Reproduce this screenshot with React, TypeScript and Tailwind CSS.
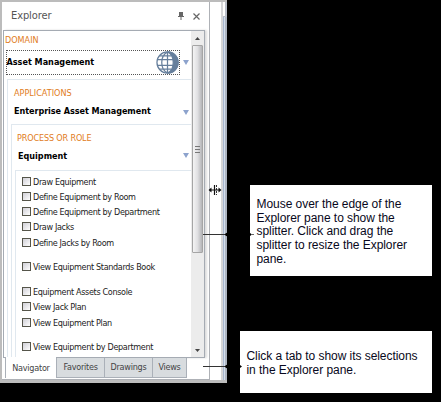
import React from 'react';

const ui = "font-['DejaVu_Sans_Condensed','DejaVu_Sans',sans-serif]";

function Arrow() {
  return (
    <svg className="mr-[2px] block h-[5px] w-[6px] shrink-0" viewBox="0 0 6 5">
      <path d="M0 0h6L3 5z" fill="#8da3cd" />
    </svg>
  );
}

function Globe() {
  return (
    <svg className="block h-[23px] w-[23px] shrink-0" viewBox="0 0 24 24" fill="none" stroke="#667f9c" strokeWidth="1.3">
      <circle cx="12" cy="12" r="11" fill="#fff" />
      <path d="M12 1a11 11 0 0 1 0 22c3.500-1.500 6-5.500 6-11S15.500 2.500 12 1z" fill="#667f9c" />
      <path d="M12 1C8 3 6 7 6 12s2 9 6 11M12 1v22M1.500 9h17M1.500 15h17M4 5.200h12M4 18.800h12" />
    </svg>
  );
}

function Item({ children, className = '' }: { children: React.ReactNode; className?: string }) {
  return (
    <div className={`flex h-[15px] items-center gap-[2px] whitespace-nowrap text-[9px] tracking-[-0.35px] text-[#222] ${className}`}>
      <span className="h-[9px] w-[9px] shrink-0 border border-[#55554a] bg-gradient-to-br from-[#d0cfd6] to-white" />
      <span className="pt-[2px]">{children}</span>
    </div>
  );
}

function ScrollBar() {
  return (
    <div className="flex w-[13px] shrink-0 flex-col bg-[#ececec]">
      <div className="flex h-[14px] items-center justify-center">
        <svg className="block h-[3px] w-[5px]" viewBox="0 0 5 3"><path d="M0 3h5L2.500 0z" fill="#444" /></svg>
      </div>
      <div className="ml-px flex h-[208px] w-[11px] items-center justify-center rounded-[1px] border border-[#a5a5a5] bg-gradient-to-r from-[#f4f4f4] via-[#e0e0e2] to-[#b4b5b8]">
        <svg className="block h-[7px] w-[6px]" viewBox="0 0 6 7"><path d="M0 .5h5M0 3.500h5M0 6.500h5" stroke="#777" /></svg>
      </div>
      <div className="mt-auto flex h-[14px] items-center justify-center">
        <svg className="block h-[3px] w-[5px]" viewBox="0 0 5 3"><path d="M0 0h5L2.500 3z" fill="#444" /></svg>
      </div>
    </div>
  );
}

function Leader({ className }: { className: string }) {
  return (
    <svg className={`absolute left-[203px] h-[5px] w-[24px] ${className}`} viewBox="0 0 24 5">
      <path d="M0 2.500h24" stroke="#333" />
      <circle cx="24" cy="2.500" r="1.800" fill="#000" />
    </svg>
  );
}

export default function App() {
  return (
    <div className="relative flex h-[402px] w-[441px] overflow-hidden bg-black">
      <div className={`flex h-[383px] w-[227px] shrink-0 border-b-[3px] border-l-2 border-t-2 border-[#bcbcbc] bg-white ${ui}`}>
        <div className="flex w-[208px] shrink-0 flex-col border-b border-r border-[#aeb1b6]">
          <div className="flex h-[28px] shrink-0 items-center pl-[9px] text-[#555]">
            <span className="w-[120px] text-[11px] tracking-[-0.1px]">Explorer</span>
            <svg className="ml-[47px] block h-[8px] w-[6px]" viewBox="0 0 6 8">
              <path d="M1 0h4v4h1v1H0V4h1zM2.500 5h1v3h-1z" fill="#666" />
            </svg>
            <svg className="ml-[9px] block h-[7px] w-[7px]" viewBox="0 0 7 7">
              <path d="M.5.5l6 6M6.500.5l-6 6" stroke="#666" strokeWidth="1.2" />
            </svg>
          </div>
          <div className="ml-px flex h-[328px] w-[202px] shrink-0 border border-[#a5abb3] shadow-[2px_0_2px_#dddddd]">
            <div className="flex min-w-0 flex-1 flex-col">
              <div className="flex h-[19px] items-center pl-[1px] text-[9px] text-[#df7c22]">DOMAIN</div>
              <div className="flex h-[25px] items-center pl-[2px]">
                <div className="flex h-[25px] w-[175px] items-center justify-between border border-dotted border-[#555]">
                  <b className="-ml-[0.5px] whitespace-nowrap pt-px text-[9px] text-black">Asset Management</b>
                  <Globe />
                </div>
                <span className="ml-[3px]"><Arrow /></span>
              </div>
              <div className="ml-[3px] mt-[4px] flex h-[278px] flex-col border-l border-t border-[#e0e8ef]">
                <div className="flex h-[26px] items-center pl-[6px] pt-[2px] text-[9px] text-[#df7c22]">APPLICATIONS</div>
                <div className="flex h-[12px] items-center justify-between pl-[6px] text-[9px] text-black">
                  <b className="whitespace-nowrap tracking-[-0.05px]">Enterprise Asset Management</b><Arrow />
                </div>
                <div className="ml-[3px] mt-[6px] flex h-[233px] flex-col border-l border-t border-[#e0e8ef]">
                  <div className="flex h-[26px] items-center pl-[5px] pt-[2px] text-[9px] tracking-[-0.15px] text-[#df7c22]">PROCESS OR ROLE</div>
                  <div className="flex h-[12px] items-center justify-between pl-[6px] text-[9px] text-black">
                    <b>Equipment</b><span className="-mt-[3px]"><Arrow /></span>
                  </div>
                  <div className="ml-[3px] mt-[7px] flex h-[187px] flex-col border-l border-t border-[#e0e8ef] pl-[6px] pt-[3px]">
                    <Item>Draw Equipment</Item>
                    <Item>Define Equipment by Room</Item>
                    <Item>Define Equipment by Department</Item>
                    <Item>Draw Jacks</Item>
                    <Item className="mt-px">Define Jacks by Room</Item>
                    <Item className="mt-[9px]">View Equipment Standards Book</Item>
                    <Item className="mt-[10px]">Equipment Assets Console</Item>
                    <Item>View Jack Plan</Item>
                    <Item className="mt-px">View Equipment Plan</Item>
                    <Item className="mt-[9px]">View Equipment by Department</Item>
                  </div>
                </div>
              </div>
            </div>
            <ScrollBar />
          </div>
          <div className="ml-[3px] flex items-start text-[9px] tracking-[-0.25px] text-[#444]">
            <div className="-mt-px flex h-[21px] w-[51px] items-center justify-center border-l border-[#aab0b8] bg-white pt-[2px]">Navigator</div>
            <div className="flex h-[20px] w-[49px] items-center justify-center border border-t-0 border-[#aab0b8] bg-[#d8dcdf]">Favorites</div>
            <div className="flex h-[20px] w-[48px] items-center justify-center border-b border-r border-[#aab0b8] bg-[#d8dcdf]">Drawings</div>
            <div className="flex h-[20px] w-[34px] items-center justify-center border-b border-r border-[#aab0b8] bg-[#d8dcdf]">Views</div>
          </div>
        </div>
        <div className="w-[11px]" />
        <div className="w-[2px] bg-[#d6d6d8]" />
        <div className="flex w-[4px] flex-col">
          <div className="h-[15px] border-b border-r-2 border-[#b9bec8]" />
          <div className="flex-1 border-l border-r-2 border-l-[#a9b8d0] border-r-[#aeb5c1] bg-[#d5dfed]" />
        </div>
      </div>
      <div className="flex flex-1 flex-col items-end pr-[9px] pt-[185px] font-['Liberation_Sans',Arial,sans-serif] text-[12px] leading-[13.7px] text-[#080820]">
        <div className="h-[91px] w-[182px] whitespace-nowrap bg-white pl-[6.5px] pt-[13px] tracking-[-0.05px]">
          Mouse over the edge of the<br />Explorer pane to show the<br />splitter. Click and drag the<br />splitter to resize the Explorer<br />pane.
        </div>
        <div className="mt-[55px] h-[62px] w-[192px] whitespace-nowrap bg-white pl-[6.5px] pt-[19px] tracking-[-0.05px]">
          Click a tab to show its selections<br />in the Explorer pane.
        </div>
      </div>
      <svg className="absolute left-[208px] top-[184px] h-[12px] w-[14px]" viewBox="0 0 14 12">
        <path d="M6.500 1v10" stroke="#111" strokeWidth="1.2" />
        <path d="M8.500 1v10" stroke="#333" strokeDasharray="2 1" />
        <path d="M2 6h10" stroke="#111" />
        <path d="M0.500 6l3-2.500v5zM13.500 6l-3-2.500v5z" fill="#111" />
      </svg>
      <Leader className="top-[232px]" />
      <Leader className="top-[364px]" />
      <svg className="absolute left-[250px] top-[232px] h-[5px] w-[5px]" viewBox="0 0 5 5">
        <path d="M0 1l2 1.500L0 4z" fill="#000" />
        <path d="M1 2.500h3" stroke="#666" />
      </svg>
      <svg className="absolute left-[240px] top-[364px] h-[5px] w-[4px]" viewBox="0 0 4 5">
        <path d="M0 1l2 1.500L0 4z" fill="#000" />
      </svg>
    </div>
  );
}
